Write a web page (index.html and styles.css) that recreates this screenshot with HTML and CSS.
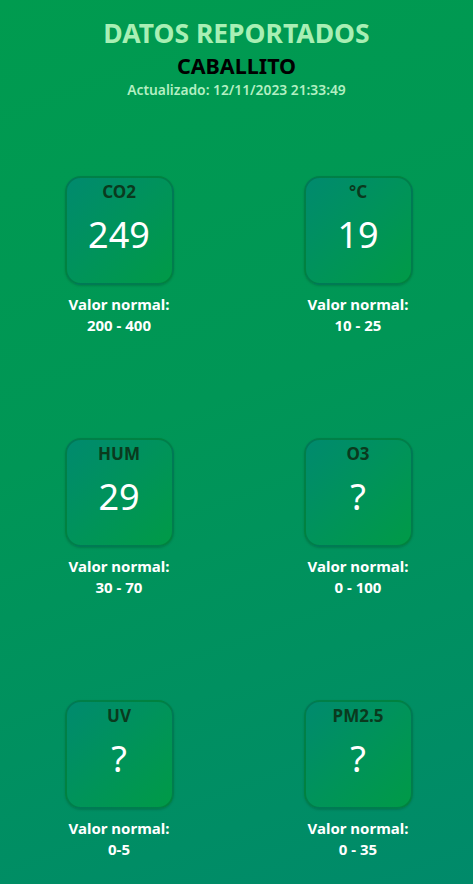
FILE: index.html
```html
<!DOCTYPE html>
<html lang="es">
<head>
<meta charset="utf-8">
<title>Datos reportados</title>
<link rel="stylesheet" href="styles.css">
</head>
<body>
<main class="page">
  <header class="header">
    <h1 class="title">DATOS REPORTADOS</h1>
    <h2 class="place">CABALLITO</h2>
    <p class="updated">Actualizado: 12/11/2023 21:33:49</p>
  </header>
  <section class="grid">
    <div class="cell">
      <div class="box"><span class="label">CO2</span><span class="value">249</span></div>
      <p class="normal">Valor normal:<br>200 - 400</p>
    </div>
    <div class="cell">
      <div class="box"><span class="label">°C</span><span class="value">19</span></div>
      <p class="normal">Valor normal:<br>10 - 25</p>
    </div>
    <div class="cell">
      <div class="box"><span class="label">HUM</span><span class="value">29</span></div>
      <p class="normal">Valor normal:<br>30 - 70</p>
    </div>
    <div class="cell">
      <div class="box"><span class="label">O3</span><span class="value">?</span></div>
      <p class="normal">Valor normal:<br>0 - 100</p>
    </div>
    <div class="cell">
      <div class="box"><span class="label">UV</span><span class="value">?</span></div>
      <p class="normal">Valor normal:<br>0-5</p>
    </div>
    <div class="cell">
      <div class="box"><span class="label">PM2.5</span><span class="value">?</span></div>
      <p class="normal">Valor normal:<br>0 - 35</p>
    </div>
  </section>
</main>
</body>
</html>
```

FILE: styles.css
```css
html, body {
  margin: 0;
  padding: 0;
}
body {
  width: 473px;
  height: 884px;
  overflow: hidden;
  background: linear-gradient(160deg, #009b4f 0%, #009656 45%, #008a6a 100%);
  font-family: "Noto Sans", "Open Sans", sans-serif;
}
.page {
  display: flex;
  flex-direction: column;
}
.header {
  display: flex;
  flex-direction: column;
  align-items: center;
  padding-top: 16px;
}
.title {
  margin: 0;
  font-size: 26.5px;
  line-height: 34px;
  font-weight: 700;
  color: #a8efb4;
}
.place {
  margin: 3px 0 0;
  font-size: 21.5px;
  line-height: 26px;
  font-weight: 700;
  color: #000;
}
.updated {
  margin: 2px 0 0;
  font-size: 13.8px;
  line-height: 18px;
  font-weight: 600;
  color: #b3efc2;
}
.grid {
  display: grid;
  grid-template-columns: 120px 120px;
  column-gap: 119px;
  row-gap: 102px;
  margin: 77px 0 0 59px;
}
.cell {
  display: flex;
  flex-direction: column;
  align-items: center;
}
.box {
  box-sizing: border-box;
  width: 109px;
  height: 109px;
  border-radius: 16px;
  border: 2px solid rgba(0, 90, 45, 0.35);
  background: linear-gradient(135deg, #008a6e 0%, #00935a 50%, #009a47 100%);
  box-shadow: 0 1px 2px rgba(0, 60, 30, 0.25);
  display: flex;
  flex-direction: column;
  align-items: center;
}
.label {
  margin-top: 3px;
  font-size: 17px;
  line-height: 22px;
  font-weight: 700;
  color: #0a3a1e;
}
.value {
  margin-top: 8px;
  font-size: 36px;
  line-height: 48px;
  font-weight: 400;
  color: #ffffff;
}
.normal {
  margin: 9px 0 0;
  text-align: center;
  font-size: 15px;
  line-height: 21px;
  font-weight: 700;
  color: #ffffff;
}
```
